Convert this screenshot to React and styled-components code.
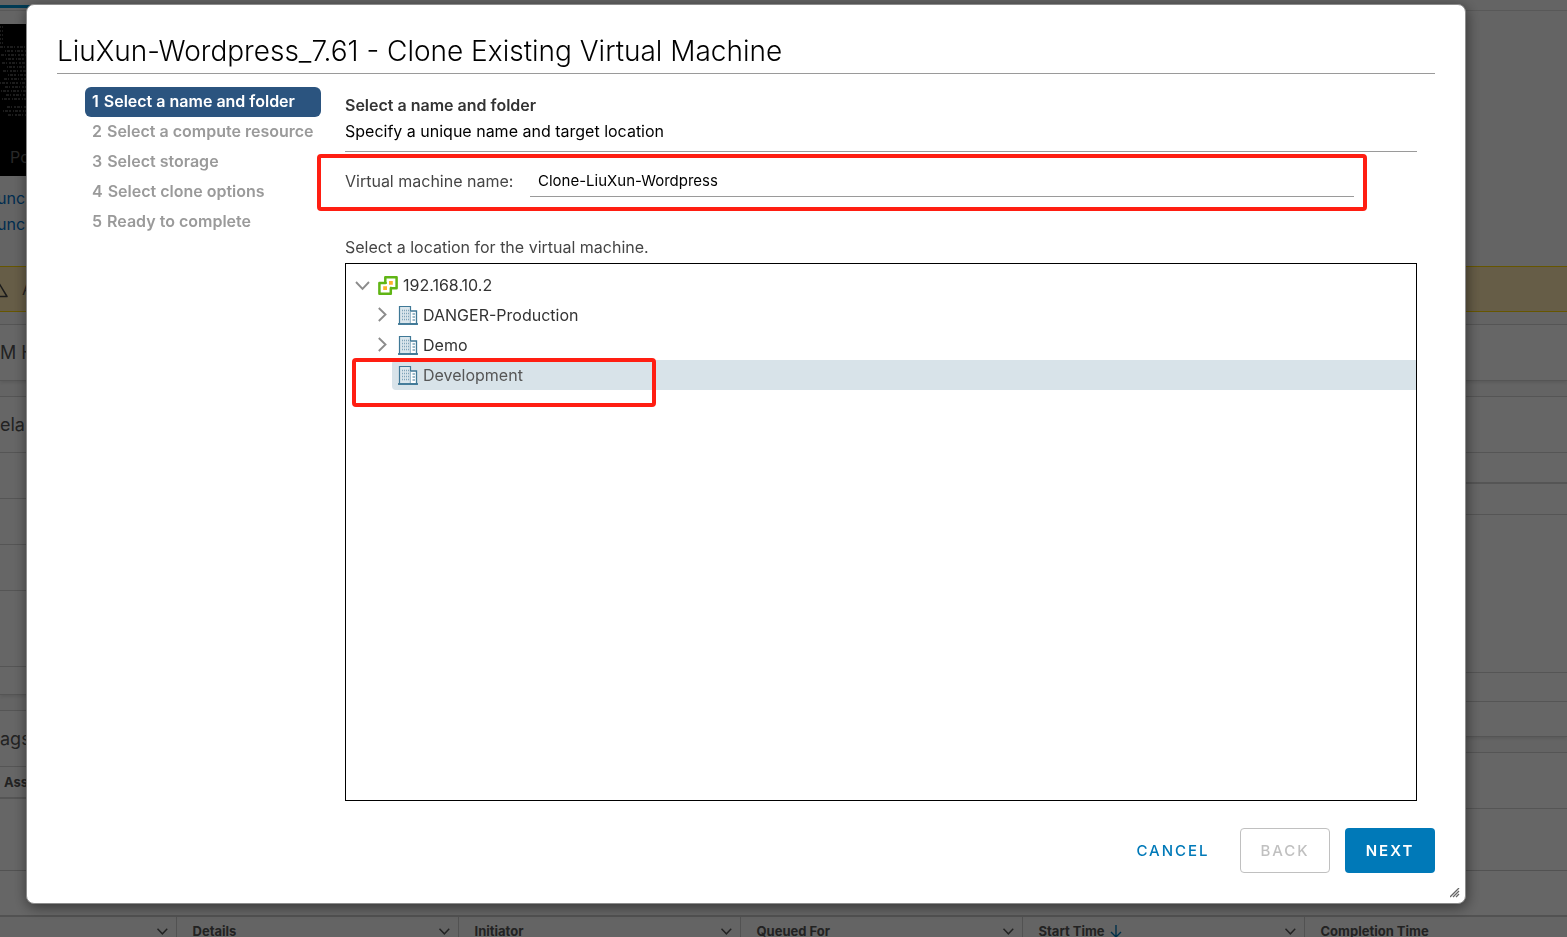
import React, { useState } from 'react';
import styled, { createGlobalStyle, css } from 'styled-components';

const GlobalStyle = createGlobalStyle`
  *, *::before, *::after { box-sizing: border-box; }
  html, body, #root { height: 100%; }
  body {
    margin: 0;
    overflow: hidden;
    background: #fafafa;
    color: #565656;
    font-family: Inter, "Liberation Sans", sans-serif;
    font-size: 16px;
    line-height: 24px;
  }
  button, input { font: inherit; }
`;

/* ---------- page behind the dialog ---------- */

const Page = styled.div`
  display: flex;
  flex-direction: column;
  height: 100vh;
  overflow: hidden;
  > * { flex: none; }
`;

const TabBar = styled.nav`
  display: flex;
  align-items: flex-end;
  height: 11px;
  border-bottom: 1px solid #ddd;
`;

const ActiveTab = styled.div`
  width: 60px;
  height: 5px;
  border-top: 3px solid #0095d3;
`;

const Summary = styled.section`
  height: 255px;
  padding-top: 13px;
`;

const Console = styled.div`
  display: flex;
  flex-direction: column;
  justify-content: space-between;
  width: 200px;
  height: 152px;
  padding-bottom: 7px;
  margin-bottom: 10px;
  background: #000;
  color: #666;
`;

const ConsoleLabel = styled.span`
  padding-left: 10px;
`;

const PageLink = styled.a`
  display: block;
  height: 26px;
  text-indent: -3px;
  color: #0072c8;
  text-decoration: none;
`;

const Alert = styled.div`
  display: flex;
  align-items: center;
  gap: 14px;
  height: 46px;
  margin-bottom: 12px;
  border: solid #ffd700;
  border-width: 1px 0;
  background: #ffe8b1;
  svg { margin-left: -12px; }
`;

const Card = styled.section`
  border: 1px solid #d4d4d4;
  border-width: 1px 0;
  background: #fff;
  box-shadow: 0 2px 3px #e4e4e4;
  margin-bottom: 15px;
`;

const CardTitle = styled.h2`
  height: 55px;
  margin: 0;
  font-size: 18px;
  font-weight: 400;
  line-height: 56px;
`;

const Columns = styled.div`
  display: grid;
  grid-template-columns: 1fr 1fr;
  height: 474px;
  overflow: hidden;
`;

const Line = styled.div`
  height: ${(p) => p.$h}px;
  border-top: ${(p) => (p.$strong ? 2 : 1)}px solid #d4d4d4;
  padding-left: 4px;
  font-size: 13px;
  font-weight: 700;
  line-height: 30px;
`;

const TaskPanel = styled.section`
  border-top: 1px solid #ccc;
  padding-top: 44px;
  background: #fff;
`;

const TaskTable = styled.table`
  width: 100%;
  table-layout: fixed;
  border-collapse: collapse;
  border-top: 2px solid #ccc;
  background: #fafafa;
`;

const TaskHead = styled.th`
  width: ${(p) => (p.$w ? `${p.$w}px` : 'auto')};
  height: 28px;
  padding: 0 8px 0 16px;
  border-right: 1px solid #ccc;
  font-size: 13px;
  font-weight: 700;
  text-align: left;
  &:last-child { border-right: 0; }
`;

const HeadContent = styled.div`
  display: flex;
  align-items: center;
  gap: 4px;
  > svg:last-child { margin-left: auto; }
`;

/* ---------- dialog ---------- */

const Backdrop = styled.div`
  position: fixed;
  inset: 0;
  display: flex;
  padding: 4px 101px 33px 26px;
  background: rgba(0, 0, 0, 0.6);
`;

const Dialog = styled.div`
  position: relative;
  display: flex;
  flex: 1;
  flex-direction: column;
  min-width: 0;
  padding: 24px 30px 30px;
  border: 1px solid #8c8c8c;
  border-radius: 8px;
  background: #fff;
  box-shadow: 1px 3px 14px rgba(0, 0, 0, 0.5);
`;

const Title = styled.h1`
  height: 45px;
  margin: 0;
  border-bottom: 1px solid #9a9a9a;
  color: #000;
  font-size: 28px;
  font-weight: 300;
  line-height: 44px;
`;

const Body = styled.div`
  display: flex;
  flex: 1;
  gap: 24px;
  min-height: 0;
  padding: 13px 18px 27px 28px;
`;

const Steps = styled.ol`
  flex: none;
  width: 236px;
  margin: 0;
  padding: 0;
  list-style: none;
`;

const Step = styled.button`
  display: flex;
  gap: 5px;
  width: 100%;
  height: 30px;
  padding: 0 0 2px 7px;
  border: 0;
  border-radius: 6px;
  background: transparent;
  color: #9a9a9a;
  font-weight: 600;
  line-height: 28px;
  white-space: nowrap;
  ${(p) =>
    p.$active &&
    css`
      background: #2b547f;
      color: #fff;
    `}
`;

const Content = styled.main`
  display: flex;
  flex: 1;
  flex-direction: column;
  min-width: 0;
`;

const Intro = styled.header`
  height: 65px;
  padding-top: 5px;
  border-bottom: 1px solid #9a9a9a;
`;

const StepTitle = styled.h2`
  margin: 0;
  color: #333;
  font-size: 16px;
  font-weight: 600;
  line-height: 26px;
`;

const StepText = styled.p`
  margin: 0;
  color: #000;
  line-height: 26px;
`;

const highlight = css`
  &::after {
    content: '';
    position: absolute;
    border: 4px solid #ff1e12;
    border-radius: 4px;
    pointer-events: none;
  }
`;

const NameField = styled.div`
  position: relative;
  display: flex;
  align-items: center;
  gap: 12px;
  height: 60px;
  padding-right: 63px;
  ${highlight}
  &::after { inset: 2px 50px 1px -28px; }
`;

const Label = styled.label`
  width: 173px;
  padding-bottom: 2px;
  color: #454545;
`;

const NameInput = styled.input`
  flex: 1;
  height: 30px;
  min-width: 0;
  padding: 0 8px 2px;
  border: 0;
  border-bottom: 1px solid #9a9a9a;
  outline: 0;
  background: transparent;
  color: #000;
  font-size: 15px;
`;

const LocationLabel = styled.div`
  padding: 23px 0 4px;
  color: #454545;
`;

const Tree = styled.ul`
  flex: 1;
  margin: 0;
  padding: 6px 0 0;
  border: 1px solid #000;
  list-style: none;
`;

const TreeItem = styled.li`
  position: relative;
  padding-left: ${(p) => (p.$level ? 26 : 6)}px;
  ${(p) =>
    p.$selected &&
    css`
      ${highlight}
      &::after { width: 304px; height: 49px; left: 6px; top: -2px; }
    `}
`;

const TreeRow = styled.div`
  display: flex;
  align-items: center;
  height: 30px;
  ${(p) =>
    p.$selected &&
    css`
      margin-left: 20px;
      border-radius: 4px 0 0 4px;
      background: #d8e3e9;
    `}
`;

const Toggle = styled.button`
  display: flex;
  align-items: center;
  justify-content: center;
  width: 20px;
  height: 30px;
  padding: 0;
  border: 0;
  background: transparent;
  color: #8c8c8c;
`;

const Node = styled.button`
  display: flex;
  align-items: center;
  gap: 5px;
  height: 30px;
  padding: 0 6px;
  border: 0;
  background: transparent;
  color: ${(p) => (p.$selected ? '#565656' : '#333')};
`;

const Footer = styled.footer`
  display: flex;
  justify-content: flex-end;
  gap: 15px;
`;

const Button = styled.button`
  width: ${(p) => (p.$kind ? 90 : 104)}px;
  height: 45px;
  padding: 0;
  border: 1px solid transparent;
  border-radius: 4px;
  background: transparent;
  color: #0079b8;
  font-size: 15px;
  font-weight: 500;
  letter-spacing: 2px;
  ${(p) =>
    p.$kind === 'outline' &&
    css`
      border-color: #c0c0c0;
      color: #c0c0c0;
    `}
  ${(p) =>
    p.$kind === 'primary' &&
    css`
      background: #0079b8;
      color: #fff;
      font-weight: 600;
    `}
`;

const ResizeGrip = styled.svg`
  position: absolute;
  right: 5px;
  bottom: 5px;
`;

/* ---------- drawings ---------- */

const Chevron = ({ down, size = 16, color = 'currentColor' }) => (
  <svg width={size} height={size} viewBox="0 0 16 16" fill="none" stroke={color} strokeWidth="1.9" aria-hidden="true">
    <path d={down ? 'M2 5 8.5 11.8 15 5' : 'M4.8 1 11.5 7.5 4.8 14'} />
  </svg>
);

const ServerIcon = () => (
  <svg width="20" height="20" viewBox="0 0 20 20" aria-hidden="true">
    <path d="M7.3 2.2h11.3v11H12.8v5.6H1.4V8h5.9z" fill="#fff" stroke="#60b515" strokeWidth="2.5" strokeLinejoin="round" />
    <path d="M11 6h3.8v3.8H11zM5.2 11.2H9V15H5.2z" fill="#fdb32b" />
    <path d="M6.3 8H9M12.8 14v-2.2" stroke="#60b515" strokeWidth="1.6" />
  </svg>
);

const DatacenterIcon = () => (
  <svg width="20" height="20" viewBox="0 0 20 20" fill="none" stroke="#3f7896" aria-hidden="true">
    <path d="M1.5 19V1.5h11V19z" fill="#dbe6ec" strokeWidth="1.2" />
    <path d="M12.5 6h6v13h-6" fill="#fff" strokeWidth="1.3" />
    <path d="M0 19h20" strokeWidth="1.8" />
    <path d="M4 5.5h7M4 8.5h7M4 11.5h7M4 14.5h7" stroke="#7ea3b8" strokeWidth="1.6" strokeDasharray="1 1" />
    <path d="M14.5 9h2.5M14.5 12h2.5M14.5 15h2.5" strokeWidth="1.2" />
  </svg>
);

const WarningIcon = () => (
  <svg width="20" height="20" viewBox="0 0 20 20" fill="none" stroke="#454545" strokeWidth="1.5" strokeLinejoin="round" aria-hidden="true">
    <path d="M10 2.5 19 17.5H1z" />
  </svg>
);

const SortArrow = () => (
  <svg width="14" height="14" viewBox="0 0 14 14" fill="none" stroke="#0079b8" strokeWidth="1.4" aria-hidden="true">
    <path d="M7 1v12M2 8l5 5 5-5" />
  </svg>
);

const ConsoleOutput = () => (
  <svg width="26" height="94" viewBox="0 0 26 94" stroke="#484848" strokeWidth="2" aria-hidden="true">
    {[3, 7, 11, 15, 19].map((y) => (
      <path key={y} d={`M0 ${y}h4`} strokeDasharray="1 1" />
    ))}
    {[23, 27, 31, 35, 39, 43, 47, 51, 55, 59, 63, 67, 71, 75, 83, 87, 91].map((y, i) => (
      <path key={y} d={`M${(i * 5) % 9} ${y}H26`} strokeDasharray={i % 2 ? '1 1 3 1 2 2' : '3 1 1 2 2 1'} />
    ))}
  </svg>
);

/* ---------- data ---------- */

const steps = [
  'Select a name and folder',
  'Select a compute resource',
  'Select storage',
  'Select clone options',
  'Ready to complete',
];

const taskColumns = [
  { label: '', width: 176 },
  { label: 'Details', width: 282 },
  { label: 'Initiator', width: 282 },
  { label: 'Queued For', width: 282 },
  { label: 'Start Time', width: 282, sorted: true },
  { label: 'Completion Time' },
];

const datacenters = [
  { name: 'DANGER-Production', expandable: true },
  { name: 'Demo', expandable: true },
  { name: 'Development', selected: true },
];

function BackgroundPage() {
  return (
    <Page>
      <TabBar><ActiveTab /></TabBar>
      <Summary>
        <Console>
          <ConsoleOutput />
          <ConsoleLabel>Po</ConsoleLabel>
        </Console>
        <PageLink href="#web">unch</PageLink>
        <PageLink href="#remote">unch</PageLink>
      </Summary>
      <Alert><WarningIcon />A</Alert>
      <Card><CardTitle>M H</CardTitle></Card>
      <Columns>
        <div>
          <Card>
            <CardTitle>ela</CardTitle>
            <Line $h={46} />
            <Line $h={46} />
            <Line $h={46} />
            <Line $h={76} />
            <Line $h={28} />
          </Card>
          <Card>
            <CardTitle>ags</CardTitle>
            <Line $h={31}>Ass</Line>
            <Line $h={90} $strong />
          </Card>
        </div>
        <div>
          <Card>
            <CardTitle />
            <Line $h={30} />
            <Line $h={32} $strong />
            <Line $h={158} />
            <Line $h={29} />
            <Line $h={35} />
          </Card>
          <Card>
            <CardTitle />
            <Line $h={90} />
          </Card>
        </div>
      </Columns>
      <TaskPanel>
        <TaskTable>
          <thead>
            <tr>
              {taskColumns.map(({ label, width, sorted }) => (
                <TaskHead key={label} $w={width} scope="col">
                  <HeadContent>
                    {label}
                    {sorted && <SortArrow />}
                    {width && <Chevron down size={12} />}
                  </HeadContent>
                </TaskHead>
              ))}
            </tr>
          </thead>
        </TaskTable>
      </TaskPanel>
    </Page>
  );
}

export default function App() {
  const [name, setName] = useState('Clone-LiuXun-Wordpress');
  return (
    <>
      <GlobalStyle />
      <BackgroundPage />
      <Backdrop>
        <Dialog role="dialog" aria-modal="true" aria-labelledby="dialog-title">
          <Title id="dialog-title">LiuXun-Wordpress_7.61 - Clone Existing Virtual Machine</Title>
          <Body>
            <Steps>
              {steps.map((step, i) => (
                <li key={step}>
                  <Step type="button" $active={i === 0}>
                    <span>{i + 1}</span>
                    <span>{step}</span>
                  </Step>
                </li>
              ))}
            </Steps>
            <Content>
              <Intro>
                <StepTitle>Select a name and folder</StepTitle>
                <StepText>Specify a unique name and target location</StepText>
              </Intro>
              <NameField>
                <Label htmlFor="vm-name">Virtual machine name:</Label>
                <NameInput id="vm-name" value={name} onChange={(e) => setName(e.target.value)} />
              </NameField>
              <LocationLabel id="location-label">Select a location for the virtual machine.</LocationLabel>
              <Tree aria-labelledby="location-label">
                <TreeItem>
                  <TreeRow>
                    <Toggle type="button" aria-label="Collapse"><Chevron down /></Toggle>
                    <Node type="button"><ServerIcon />192.168.10.2</Node>
                  </TreeRow>
                </TreeItem>
                {datacenters.map(({ name: label, expandable, selected }) => (
                  <TreeItem key={label} $level={1} $selected={selected}>
                    <TreeRow $selected={selected}>
                      {expandable && <Toggle type="button" aria-label="Expand"><Chevron /></Toggle>}
                      <Node type="button" $selected={selected}><DatacenterIcon />{label}</Node>
                    </TreeRow>
                  </TreeItem>
                ))}
              </Tree>
            </Content>
          </Body>
          <Footer>
            <Button type="button">CANCEL</Button>
            <Button type="button" $kind="outline" disabled>BACK</Button>
            <Button type="button" $kind="primary">NEXT</Button>
          </Footer>
          <ResizeGrip width="10" height="10" viewBox="0 0 10 10" stroke="#666" strokeWidth="1.3" aria-hidden="true">
            <path d="M0 9 9 0M3 9 9 3M6 9 9 6" />
          </ResizeGrip>
        </Dialog>
      </Backdrop>
    </>
  );
}
